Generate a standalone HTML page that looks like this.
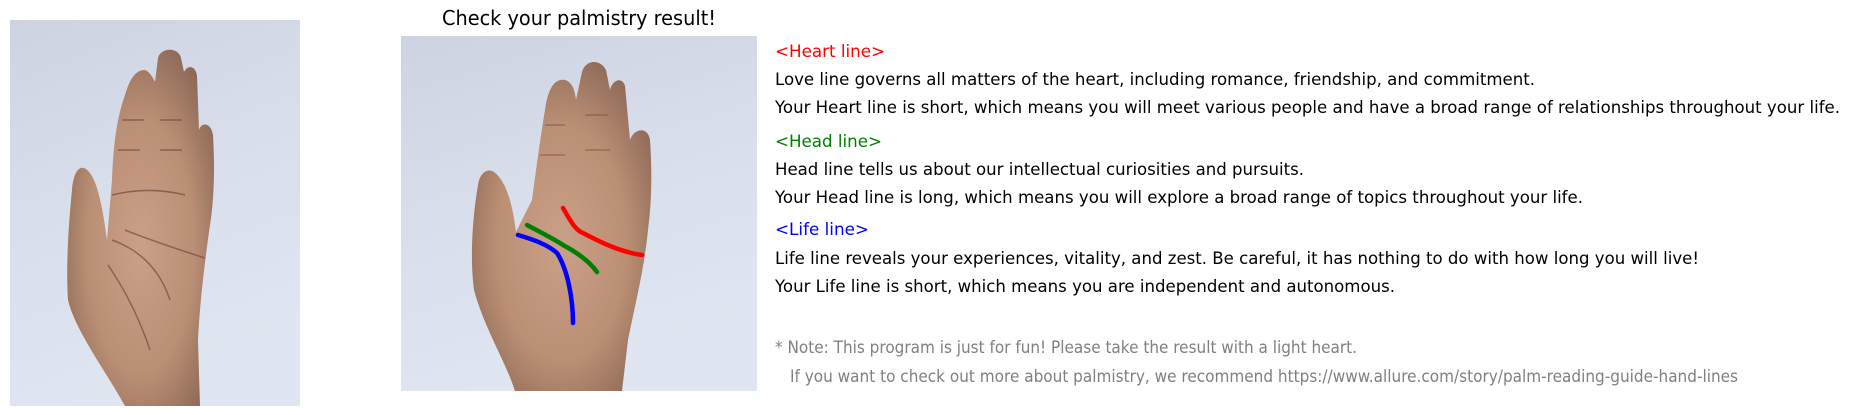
<!DOCTYPE html>
<html><head><meta charset="utf-8"><style>
html,body{margin:0;padding:0;background:#fff;width:1851px;height:415px;overflow:hidden}
svg{display:block}
text{font-family:"DejaVu Sans","Liberation Sans",sans-serif}
</style></head><body>
<svg width="1851" height="415" viewBox="0 0 1851 415" xmlns="http://www.w3.org/2000/svg">
<defs>
<linearGradient id="bg" x1="0" y1="0" x2="0.3" y2="1">
<stop offset="0" stop-color="#cdd3e1"/><stop offset="0.5" stop-color="#d8deea"/><stop offset="1" stop-color="#e0e6f1"/>
</linearGradient>
<radialGradient id="skin" cx="0.5" cy="0.55" r="0.6">
<stop offset="0" stop-color="#caa088"/><stop offset="0.6" stop-color="#bb8f74"/><stop offset="1" stop-color="#8e6a58"/>
</radialGradient>
</defs>
<rect x="10" y="20" width="290" height="386" fill="url(#bg)"/>
<path d="M125,406 C105,370 75,330 68,300 C66,270 68,230 72,190 C73,175 78,166 84,168 C95,172 102,200 107,240 L112,180 C113,150 116,120 125,95 C130,78 136,70 145,70 C150,72 153,78 155,82 L158,58 C160,48 178,46 181,58 L184,72 C188,64 196,66 197,76 L199,130 C201,122 211,122 213,135 C215,170 214,200 210,225 C205,260 200,300 198,340 L200,406 Z" fill="url(#skin)"/>
<g stroke="#6e4e42" stroke-width="1.5" fill="none" opacity="0.7">
<path d="M112,195 C140,188 165,190 185,195"/>
<path d="M125,230 C150,240 180,250 205,258"/>
<path d="M112,240 C140,250 160,270 170,300"/>
<path d="M108,265 C125,290 140,320 150,350"/>
<path d="M118,150 L140,150 M160,150 L182,150 M160,120 L182,120 M122,120 L144,120"/>
</g>
<rect x="401" y="36" width="356" height="355" fill="url(#bg)"/>
<path d="M515,391 C505,360 485,330 474,290 C470,260 472,220 478,185 C480,172 488,168 494,172 C505,180 512,200 516,232 L532,200 C536,170 540,140 545,110 C548,88 555,78 565,80 C572,82 575,90 576,100 L582,72 C585,60 600,58 606,70 L610,90 C612,80 622,76 625,86 L630,140 C634,128 648,126 650,140 C652,170 652,200 648,230 C644,270 636,300 628,340 L622,391 Z" fill="url(#skin)"/>
<g stroke="#7a5848" stroke-width="1.5" fill="none" opacity="0.6">
<path d="M540,155 L565,155 M585,150 L610,150 M545,125 L565,125 M585,115 L608,115"/>
</g>
<g fill="none" stroke-width="4.5" stroke-linecap="round">
<path d="M563,208 C570,220 575,230 583,233 C600,242 620,252 642,255" stroke="#ff0000"/>
<path d="M527,225 C540,232 552,238 563,245 C578,253 590,262 597,272" stroke="#008000"/>
<path d="M518,235 C535,240 548,245 557,253 C568,270 573,300 573,323" stroke="#0000ff"/>
</g>
<text x="579" y="25" font-size="20" text-anchor="middle" textLength="274" lengthAdjust="spacingAndGlyphs" fill="#000">Check your palmistry result!</text>
<g font-size="16.5">
<text x="775" y="57" fill="#ff0000" textLength="110" lengthAdjust="spacingAndGlyphs">&lt;Heart line&gt;</text>
<text x="775" y="85" fill="#000" textLength="760" lengthAdjust="spacingAndGlyphs">Love line governs all matters of the heart, including romance, friendship, and commitment.</text>
<text x="775" y="113" fill="#000" textLength="1065" lengthAdjust="spacingAndGlyphs">Your Heart line is short, which means you will meet various people and have a broad range of relationships throughout your life.</text>
<text x="775" y="147" fill="#008000" textLength="107" lengthAdjust="spacingAndGlyphs">&lt;Head line&gt;</text>
<text x="775" y="175" fill="#000" textLength="529" lengthAdjust="spacingAndGlyphs">Head line tells us about our intellectual curiosities and pursuits.</text>
<text x="775" y="203" fill="#000" textLength="808" lengthAdjust="spacingAndGlyphs">Your Head line is long, which means you will explore a broad range of topics throughout your life.</text>
<text x="775" y="235" fill="#0000ff" textLength="94" lengthAdjust="spacingAndGlyphs">&lt;Life line&gt;</text>
<text x="775" y="264" fill="#000" textLength="924" lengthAdjust="spacingAndGlyphs">Life line reveals your experiences, vitality, and zest. Be careful, it has nothing to do with how long you will live!</text>
<text x="775" y="292" fill="#000" textLength="620" lengthAdjust="spacingAndGlyphs">Your Life line is short, which means you are independent and autonomous.</text>
<text x="775" y="353" fill="#808080" textLength="582" lengthAdjust="spacingAndGlyphs">* Note: This program is just for fun! Please take the result with a light heart.</text>
<text x="790" y="382" fill="#808080" textLength="948" lengthAdjust="spacingAndGlyphs">If you want to check out more about palmistry, we recommend https://www.allure.com/story/palm-reading-guide-hand-lines</text>
</g>
</svg>
</body></html>
